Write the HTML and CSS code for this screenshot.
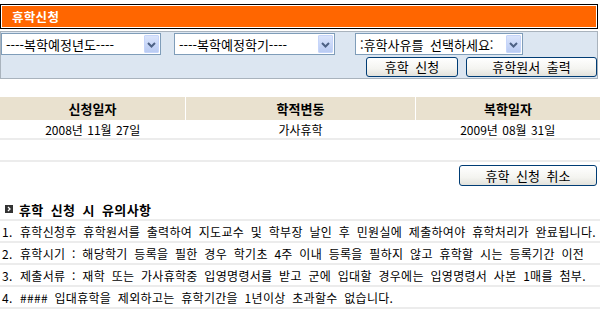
FILE: index.html
```html
<!DOCTYPE html>
<html lang="ko">
<head>
<meta charset="utf-8">
<title>휴학신청</title>
<link rel="stylesheet" href="styles.css">
</head>
<body>
<div class="title"><div class="title-in">휴학신청</div></div>

<div class="panel">
  <div class="sel-row">
    <div class="sel s1"><span>----복학예정년도----</span><i class="dd"><svg width="13" height="15" viewBox="0 0 13 15"><path d="M3 6 L6.5 9.5 L10 6" fill="none" stroke="#4d6185" stroke-width="2"/></svg></i></div>
    <div class="sel s2"><span>----복학예정학기----</span><i class="dd"><svg width="13" height="15" viewBox="0 0 13 15"><path d="M3 6 L6.5 9.5 L10 6" fill="none" stroke="#4d6185" stroke-width="2"/></svg></i></div>
    <div class="sel s3"><span>:휴학사유를 선택하세요:</span><i class="dd"><svg width="13" height="15" viewBox="0 0 13 15"><path d="M3 6 L6.5 9.5 L10 6" fill="none" stroke="#4d6185" stroke-width="2"/></svg></i></div>
  </div>
  <div class="btn-row">
    <button class="btn b1">휴학 신청</button>
    <button class="btn b2">휴학원서 출력</button>
  </div>
</div>

<table class="hist">
  <thead>
    <tr><th class="c1">신청일자</th><th class="c2">학적변동</th><th class="c3">복학일자</th></tr>
  </thead>
  <tbody>
    <tr class="data"><td>2008년 11월 27일</td><td>가사휴학</td><td>2009년 08월 31일</td></tr>
    <tr class="empty"><td></td><td></td><td></td></tr>
  </tbody>
</table>

<div class="cancel-row"><button class="btn b3">휴학 신청 취소</button></div>

<div class="notes-title"><span class="bullet"><svg width="8" height="8" viewBox="0 0 8 8"><path d="M3 2 L5 4 L3 6" fill="none" stroke="#fff" stroke-width="1.3"/></svg></span>휴학 신청 시 유의사항</div>
<ol class="notes">
  <li><span class="num">1.</span><span>휴학신청후 휴학원서를 출력하여 지도교수 및 학부장 날인 후 민원실에 제출하여야 휴학처리가 완료됩니다.</span></li>
  <li><span class="num">2.</span><span>휴학시기 : 해당학기 등록을 필한 경우 학기초 4주 이내 등록을 필하지 않고 휴학할 시는 등록기간 이전</span></li>
  <li><span class="num">3.</span><span>제출서류 : 재학 또는 가사휴학중 입영명령서를 받고 군에 입대할 경우에는 입영명령서 사본 1매를 첨부.</span></li>
  <li><span class="num">4.</span><span>#### 입대휴학을 제외하고는 휴학기간을 1년이상 초과할수 없습니다.</span></li>
</ol>
</body>
</html>
```

FILE: styles.css
```css
html, body {
  margin: 0;
  padding: 0;
  background: #fff;
}
body {
  width: 600px;
  font-family: "Noto Sans CJK KR", "Noto Sans", sans-serif;
  font-size: 12px;
  color: #000;
  word-spacing: 3px;
}

.title {
  margin: 4px 2px 0 0;
  border: 1px solid #000;
  padding: 1px;
}
.title-in {
  background: #ff6600;
  color: #fff;
  font-weight: bold;
  height: 21px;
  line-height: 21px;
  padding-left: 10px;
  font-size: 12.5px;
  letter-spacing: 0.3px;
}

.panel {
  margin: 2px 2px 0 0;
  background: #dce6f1;
  border: 1px solid #a9b3bd;
  padding: 1px 0 1px 0;
}
.sel-row {
  display: flex;
  height: 22px;
}
.sel {
  box-sizing: border-box;
  height: 22px;
  border: 1px solid #7f9db9;
  background: #fff;
  display: flex;
  align-items: center;
  justify-content: space-between;
  padding: 0 1px 0 4px;
  white-space: nowrap;
  font-size: 13px;
}
.s1 { width: 160px; }
.s2 { width: 161px; margin-left: 13px; }
.s3 { width: 168px; margin-left: 20px; }
.dd {
  box-sizing: border-box;
  width: 15px;
  height: 18px;
  background: linear-gradient(#dbe5fc, #b9cbf3);
  border: 1px solid #c6d5fa;
  border-radius: 1px;
  display: flex;
  align-items: center;
  justify-content: center;
}

.btn-row {
  display: flex;
  justify-content: flex-end;
  gap: 8px;
  margin-top: 2px;
}
.btn {
  box-sizing: border-box;
  height: 20px;
  border: 1px solid #003c74;
  border-radius: 3px;
  background: linear-gradient(#ffffff, #f4f4f0 60%, #e2e2dc);
  font-family: "Noto Sans CJK KR", "Noto Sans", sans-serif;
  font-size: 13px;
  color: #000;
  padding: 0;
  line-height: 18px;
  text-align: center;
  word-spacing: 3px;
}
.b1 { width: 92px; }
.b2 { width: 131px; }
.b3 { width: 138px; height: 21px; }

.hist {
  margin-top: 18px;
  width: 598px;
  border-collapse: collapse;
  table-layout: fixed;
}
.hist th {
  background: #e9e1cf;
  height: 23px;
  padding: 0;
  font-weight: bold;
  font-size: 13px;
  text-align: center;
}
.hist th + th {
  border-left: 1px solid #fff;
}
.c1 { width: 185px; }
.c2 { width: 229px; }
.c3 { width: 184px; }
.hist td {
  padding: 0;
  text-align: center;
  border-bottom: 2px solid #ececec;
  word-spacing: 1px;
}
.data td { height: 18px; }
.empty td { height: 20px; }

.cancel-row {
  display: flex;
  justify-content: flex-end;
  margin-top: 3px;
  padding-right: 3px;
}

.notes-title {
  margin-top: 13px;
  height: 20px;
  border-bottom: 2px solid #ececec;
  display: flex;
  align-items: center;
  font-weight: bold;
  font-size: 13px;
  letter-spacing: 0.4px;
  padding-left: 5px;
}
.bullet {
  width: 8px;
  height: 8px;
  background: #333;
  display: inline-flex;
  margin-right: 6px;
}
.notes {
  list-style: none;
  margin: 0;
  padding: 0;
}
.notes li {
  display: flex;
  height: 20px;
  align-items: center;
  border-bottom: 2px solid #ececec;
  white-space: nowrap;
  letter-spacing: 0.3px;
}
.num {
  width: 20px;
  padding-left: 2px;
  box-sizing: border-box;
  flex: none;
}
```
